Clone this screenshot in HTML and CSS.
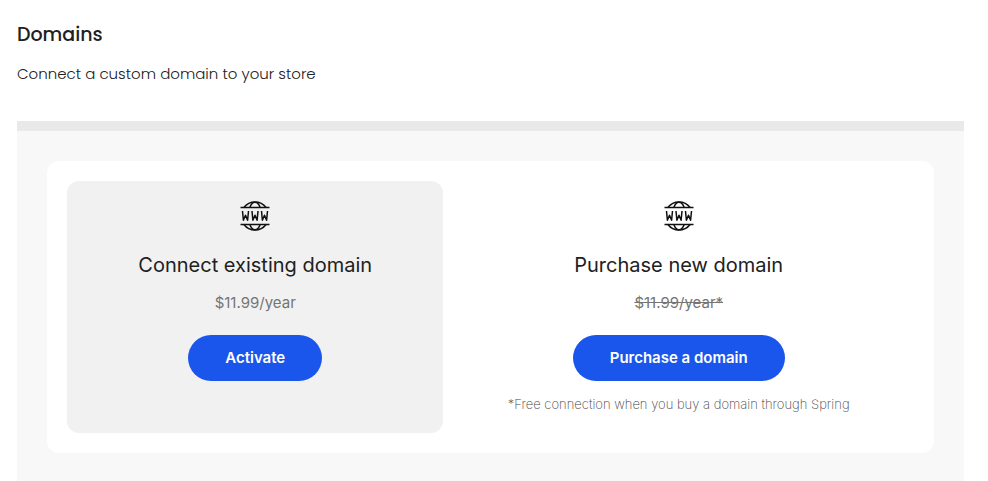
FILE: index.html
```html
<!DOCTYPE html>
<html lang="en">
<head>
    <meta charset="UTF-8">
    <meta name="viewport" content="width=device-width, initial-scale=1.0">
    <title>Domains</title>
    <link rel="stylesheet" href="styles.css">
</head>
<body>
    <!-- Page Header -->
    <header class="page-header">
        <h1>Domains</h1>
        <p>Connect a custom domain to your store</p>
    </header>

    <!-- Domain Options -->
    <main class="panel">
        <div class="card">
            <section class="option connect">
                <svg class="icon" viewBox="0 0 30 30" aria-hidden="true">
                    <path d="M0.5 6.5h29M0.5 23.5h29"/>
                    <path d="M3.9 6.5A14 14 0 0 1 26.1 6.5M3.9 23.5A14 14 0 0 0 26.1 23.5"/>
                    <path d="M9.8 6.5C11 3 12.8 1.2 15 1.2S19 3 20.2 6.5M9.8 23.5C11 27 12.8 28.8 15 28.8S19 27 20.2 23.5"/>
                    <path d="M2.5 10L3.4 19.3L5.5 14.2L7.6 19.3L8.5 10M12 10L12.9 19.3L15 14.2L17.1 19.3L18 10M21.5 10L22.4 19.3L24.5 14.2L26.6 19.3L27.5 10"/>
                </svg>
                <h2>Connect existing domain</h2>
                <p class="price">$11.99/year</p>
                <button type="button">Activate</button>
            </section>

            <section class="option purchase">
                <svg class="icon" viewBox="0 0 30 30" aria-hidden="true">
                    <path d="M0.5 6.5h29M0.5 23.5h29"/>
                    <path d="M3.9 6.5A14 14 0 0 1 26.1 6.5M3.9 23.5A14 14 0 0 0 26.1 23.5"/>
                    <path d="M9.8 6.5C11 3 12.8 1.2 15 1.2S19 3 20.2 6.5M9.8 23.5C11 27 12.8 28.8 15 28.8S19 27 20.2 23.5"/>
                    <path d="M2.5 10L3.4 19.3L5.5 14.2L7.6 19.3L8.5 10M12 10L12.9 19.3L15 14.2L17.1 19.3L18 10M21.5 10L22.4 19.3L24.5 14.2L26.6 19.3L27.5 10"/>
                </svg>
                <h2>Purchase new domain</h2>
                <p class="price"><s>$11.99/year*</s></p>
                <button type="button">Purchase a domain</button>
                <p class="note">*Free connection when you buy a domain through Spring</p>
            </section>
        </div>
    </main>
</body>
</html>
```

FILE: styles.css
```css
* {
    box-sizing: border-box;
}
body {
    font-family: Inter, "Liberation Sans", sans-serif;
    background-color: #fff;
    color: #212121;
    margin: 0;
    padding: 21px 24px 0 17px;
}
h1, h2, p {
    margin: 0;
}

/* Page Header */
.page-header {
    font-family: Poppins, Inter, sans-serif;
    padding-bottom: 35px;
}
.page-header h1 {
    font-size: 19px;
    font-weight: 500;
    line-height: 28px;
}
.page-header p {
    font-size: 15px;
    font-weight: 300;
    line-height: 25px;
    margin-top: 12px;
}

/* Domain Options */
.panel {
    background-color: #f8f8f8;
    border-top: 10px solid #e9e9e9;
    padding: 30px 30px 28px;
}
.card {
    display: flex;
    background-color: #fff;
    border-radius: 12px;
    padding: 20px;
}
.option {
    display: flex;
    flex-direction: column;
    align-items: center;
    border-radius: 12px;
    padding: 20px 0;
    text-align: center;
}
.connect {
    flex: 4;
    background-color: #f1f1f1;
}
.purchase {
    flex: 5;
}
.icon {
    width: 30px;
    height: 30px;
    fill: none;
    stroke: #111;
    stroke-width: 1.5;
    stroke-linejoin: round;
}
.option h2 {
    font-size: 20px;
    font-weight: 400;
    line-height: 28px;
    margin-top: 20px;
}
.price {
    color: #757575;
    font-size: 15px;
    line-height: 24px;
    margin-top: 12px;
}
button {
    background-color: #1a56ec;
    border: none;
    border-radius: 25px;
    color: #fff;
    cursor: pointer;
    font-family: inherit;
    font-size: 15px;
    font-weight: 600;
    line-height: 22px;
    margin-top: 20px;
    padding: 12px 37px;
}
.note {
    color: #444;
    font-size: 13px;
    font-weight: 200;
    line-height: 18px;
    margin-top: 14px;
}
```
